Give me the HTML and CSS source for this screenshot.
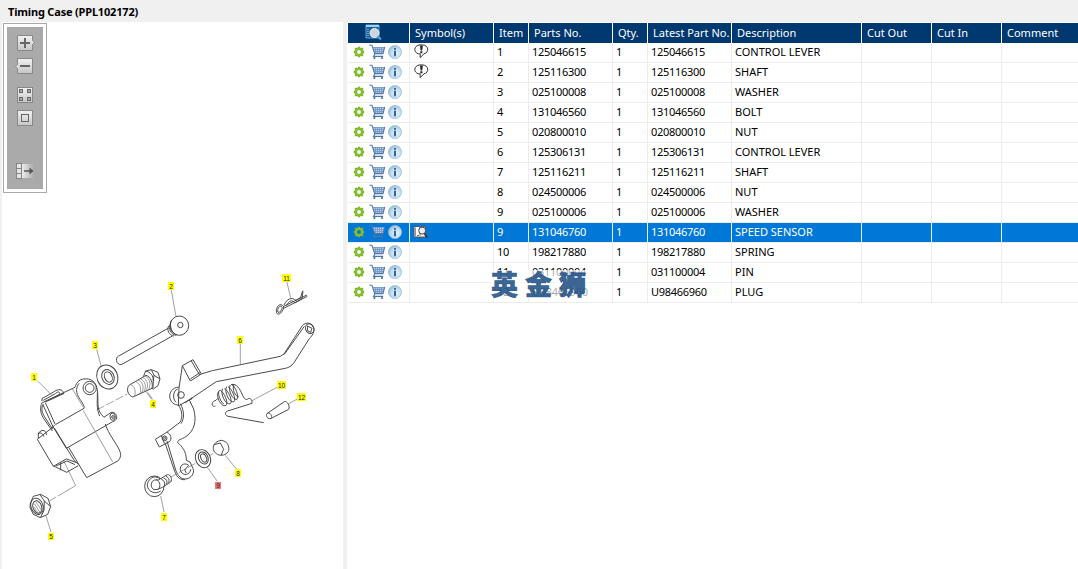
FILE: index.html
```html
<!DOCTYPE html>
<html lang="en">
<head>
  <meta charset="UTF-8" />
  <meta name="viewport" content="width=device-width, initial-scale=1" />
  <title>Timing Case (PPL102172)</title>
  <link rel="stylesheet" href="styles.css">
</head>
<body>
  <!-- shared icons -->
  <svg class="defs" aria-hidden="true">
    <defs>
      <linearGradient id="btn" x1="0" y1="0" x2="0" y2="1">
        <stop offset="0" stop-color="#f2f2f2" />
        <stop offset="1" stop-color="#c6c6c6" />
      </linearGradient>
      <linearGradient id="fade">
        <stop offset="0" stop-color="#ececec" />
        <stop offset="1" stop-color="#aaaaaa" />
      </linearGradient>
      <radialGradient id="orb" cx=".6" cy=".6" r=".65">
        <stop offset="0" stop-color="#e6f2fb" />
        <stop offset=".6" stop-color="#c0dcf0" />
        <stop offset="1" stop-color="#8fb5d4" />
      </radialGradient>
      <symbol id="gear" viewBox="0 0 12 12">
        <g stroke="#7db52c" stroke-width="2.4" fill="none">
          <path d="M6 .8V3.500M6 8.500V11.200M.8 6H3.500M8.500 6H11.200M2.200 2.200l2 2M7.800 7.800l2 2M9.800 2.200l-2 2M4.200 7.800l-2 2" />
          <circle cx="6" cy="6" r="3.100" stroke="#86bb32" />
        </g>
      </symbol>
      <symbol id="cart" viewBox="0 0 17 16">
        <path d="M3.500 3H15.600L14 9H5.600z" fill="#b4cae5" />
        <path d="M3.600 3.500H15.400M4.200 5.500H15M4.800 7.500H14.400M6.500 3v6M8.500 3v6M10.500 3v6M12.500 3v6" stroke="#6c92c0" stroke-width=".7" fill="none" />
        <path d="M.4 1.200H2.900L5.700 9.600H14L15.700 3M5.900 9.800L4.600 12.400H14.200" stroke="#4d77a8" stroke-width="1.100" fill="none" />
        <circle cx="5.400" cy="14" r="1.100" fill="#3f6fa5" />
        <circle cx="13" cy="14" r="1.100" fill="#3f6fa5" />
      </symbol>
      <symbol id="info" viewBox="0 0 14 14">
        <circle cx="7" cy="7" r="6.600" fill="url(#orb)" stroke="#9dbdd6" stroke-width=".7" />
        <path d="M6 3h2v1.800H6zM6 5.800H8v5.500H6z" fill="#33639a" />
      </symbol>
      <symbol id="note" viewBox="0 0 16 15">
        <path d="M4.600 9.800C-1 8.600-.3 1.200 6 .9h2.600c6.200.3 7 7.600 1.400 8.900L6.200 13.600V9.800z" fill="#fff" stroke="#333" />
        <path d="M6 1.600h2.800L8.200 6.600H6.600zM6.300 7.300h2.100v1.900H6.300z" fill="#222" />
      </symbol>
      <symbol id="book" viewBox="0 0 16 14">
        <path d="M1 1.500h5l1 1 1-1h4.500V12H8l-1 1-1-1H1z" fill="#fff" stroke="#555" />
        <path d="M2.300 2.500v8.500M4 10.500h2M7 2.500V12" stroke="#777" />
        <circle cx="9.200" cy="5.600" r="3.500" fill="#e8eef2" stroke="#444" />
        <path d="M11.300 8.500l3 4" stroke="#4b3a2b" stroke-width="2" />
      </symbol>
    </defs>
  </svg>

  <div class="title-bar"><h1>Timing Case (PPL102172)</h1></div>

  <div class="content">
    <div class="drawing">
      <svg class="diagram" viewBox="2 23 341 546">
        <!-- 11 split pin -->
        <g transform="translate(260 265) scale(.3333)">
          <path class="lead" d="M80 48L92 98" />
          <path d="M67 121C58 114 49 126 49 138C49 150 58 150 65 141C70 134 74 124 67 121ZM64 124C57 122 53 131 53 138C53 144 58 144 62 138C66 132 68 127 64 124M69 125L141 90M69 131L142 94M72 120C82 100 94 96 108 106L122 97L128 77M80 122C86 107 96 103 105 114L126 101L129 79" />
        </g>
        <!-- 2 shaft, 3 washer, 4 bolt -->
        <g transform="translate(90 270) scale(.3333)">
          <path class="lead" d="M244 60L258 140M20 238L34 290M185 388L168 364" />
          <path class="lead axis" d="M20 420L112 372" />
          <path d="M236 174L88 257C72 263 80 288 96 283L247 198M236 168C229 179 238 197 252 198M241 162C234 177 243 193 258 196" />
          <ellipse class="solid" cx="268" cy="167" rx="28" ry="29" />
          <path d="M244 151C237 168 245 190 261 195" />
          <circle cx="271" cy="165" r="8" />
          <ellipse cx="52" cy="321" rx="31" ry="37" transform="rotate(-24 52 321)" />
          <ellipse cx="54" cy="321" rx="18" ry="23" transform="rotate(-24 54 321)" />
          <ellipse cx="55" cy="321" rx="11" ry="16" transform="rotate(-24 55 321)" />
          <path class="solid" d="M161 318L167 303L184 299L204 307L210 327L204 347L190 357L175 350Z" />
          <path d="M167 303C182 307 190 316 190 333L189 354M184 299L192 316L210 327M192 316L190 333" />
          <path class="solid" d="M168 316L118 345C107 356 114 378 129 381L186 355C190 339 182 320 168 316Z" />
          <path class="thin" d="M122 344C134 348 139 366 133 379M138 335C152 342 156 359 148 373M145 331C160 337 163 354 155 369M152 327C166 333 170 350 162 366M159 323C173 329 176 346 169 362M166 319C180 325 183 342 176 359" />
        </g>
        <!-- 1 control lever assembly, 5 nut -->
        <g transform="translate(20 360) scale(.3333)">
          <path class="lead" d="M52 62L94 104M130 300L167 377L136 395M78 468L93 516" />
          <path class="lead axis" d="M136 395L90 422" />
          <path d="M63 131L75 124L165 82L167 76C174 60 186 55 205 57C220 60 229 71 232 90C236 119 229 145 244 163L252 172L272 158C283 154 291 164 290 174C289 180 284 183 278 185L139 265L99 200L69 135" />
          <path d="M66 124V116L104 94C114 86 128 88 130 98L129 104M70 121L106 101C114 93 120 95 119 103L83 122M75 126L103 114L130 101M70 132C62 146 66 159 76 174L98 208M64 133C59 148 63 164 72 177L97 213M76 128L105 192" />
          <path d="M106 194L192 145C196 137 179 119 174 108C167 94 169 82 177 70M232 98C233 120 228 146 239 168M256 192C260 209 278 236 291 257C302 276 307 286 295 302L200 353L146 262M99 201L52 238L100 319M96 202L104 196M103 204L163 302L175 313" />
          <path d="M55 235V219L66 211C76 211 80 218 79 225M54 221C62 216 70 221 72 230M100 319L139 297L168 307M101 318L140 337L175 317M108 318L141 303L165 314M122 307V331" />
          <path class="lead" d="M155 84L190 142M190 152L278 306" />
          <circle cx="209" cy="84" r="20" /><circle cx="209" cy="84" r="13" />
          <ellipse cx="278" cy="170" rx="8" ry="11" /><circle cx="279" cy="171" r="4" />
          <path class="solid" d="M31 430L40 409L62 403L84 415L92 440L83 463L61 473L40 463L30 443Z" />
          <path d="M60 404L73 423L92 440M73 423L72 452L61 473" />
          <ellipse cx="51" cy="439" rx="18" ry="25" transform="rotate(-18 51 439)" />
          <ellipse cx="52" cy="441" rx="13" ry="19" transform="rotate(-18 52 441)" />
          <path class="thin" d="M43 431L60 457M48 426L64 450M41 440L54 459" />
        </g>
        <!-- 6 lever, 10 spring, 12 plug -->
        <g transform="translate(160 310) scale(.3333)">
          <path class="lead" d="M241 102V162M351 232L276 272M412 267L386 281" />
          <path class="solid" d="M62 232C44 229 30 241 29 258C29 275 44 287 57 285" />
          <path d="M53 237C39 241 37 267 48 277" />
          <path class="solid" d="M55 286L57 235L67 167L99 149L124 192L157 182L361 139L372 132L427 47C438 34 457 38 462 55C464 65 457 77 448 86L402 158C395 168 386 173 376 175L169 215L90 268L59 286Z" />
          <path d="M67 167L91 213L124 192M91 207L121 187M94 153L119 195M371 134L376 129L433 49M75 279L97 263L92 270" />
          <circle cx="63" cy="255" r="10" />
          <ellipse cx="449" cy="56" rx="12" ry="15" transform="rotate(-24 449 56)" />
          <path d="M442 48L456 55L452 67L443 62Z" />
          <path d="M166 289C152 291 154 274 168 271L174 265M176 244C165 261 185 293 198 286C207 280 192 246 181 241C171 240 176 270 191 282M188 236C179 251 198 287 211 281C220 275 204 239 193 236M200 230C191 246 209 281 222 275C230 269 215 234 204 230M211 225C202 240 219 272 231 268C238 262 226 227 215 224M222 222C215 238 226 260 236 260M213 224C230 219 240 238 246 252C252 267 258 272 265 266C273 264 277 270 276 280L203 303C194 306 194 316 204 319L311 338" />
          <path d="M322 310L373 275C382 271 391 290 386 298L334 325C324 330 315 317 322 310C330 305 338 319 334 325" />
        </g>
        <!-- bracket, 7 screw, 8 plug, 9 washer -->
        <g transform="translate(130 390) scale(.3333)">
          <path class="lead" d="M54 8L68 28M92 318L102 366M232 232L262 274M286 196L320 238" />
          <path class="lead axis" d="M118 264L250 190" />
          <path d="M145 45C158 64 158 83 150 97L110 127L76 148L88 171L120 154M111 153L138 243C144 258 154 268 168 267C183 265 195 250 189 235L180 216L169 211C170 185 155 168 143 158C143 150 148 150 163 143C196 123 200 91 191 57L178 30M105 158L134 244C141 264 152 270 165 269M151 41C164 65 163 86 153 101" />
          <path d="M110 127C124 131 125 147 120 154M94 137L103 160" />
          <circle cx="104" cy="145" r="7" /><circle cx="104" cy="145" r="3" />
          <path d="M176 226C160 214 145 230 153 245C160 259 180 255 182 238M176 226L164 240L169 249" />
          <ellipse class="solid" cx="219" cy="206" rx="22" ry="28" transform="rotate(-25 219 206)" />
          <ellipse cx="220" cy="204" rx="14" ry="19" transform="rotate(-25 220 204)" />
          <ellipse cx="221" cy="204" rx="8" ry="13" transform="rotate(-25 221 204)" />
          <path class="solid" d="M250 172C250 161 262 152 274 151C290 153 299 166 296 182C292 192 279 198 267 195C255 190 249 183 250 172Z" />
          <path d="M252 164L271 159L281 178L273 196" />
          <ellipse cx="73" cy="289" rx="29" ry="31" />
          <path d="M91 267C73 251 51 269 52 287C53 304 76 315 92 303" />
          <path class="solid" d="M73 270L85 270L112 254C122 252 128 269 122 276L97 292L84 298L72 299C61 294 61 274 73 270Z" />
          <path d="M79 268C91 275 93 291 84 298M94 268C103 271 106 279 103 287M101 264C110 267 113 275 110 283M108 259C117 263 119 270 116 278" />
        </g>

        <!-- callouts -->
        <g class="tags">
          <rect x="282" y="274" width="9" height="8" /><text x="286.500" y="280.500">11</text>
          <rect x="168" y="282" width="6" height="8" /><text x="171" y="288.500">2</text>
          <rect x="92" y="341" width="6" height="8" /><text x="95" y="347.500">3</text>
          <rect x="237" y="336" width="6" height="8" /><text x="240" y="342.500">6</text>
          <rect x="31" y="373" width="6" height="8" /><text x="34" y="379.500">1</text>
          <rect x="150" y="400" width="6" height="8" /><text x="153" y="406.500">4</text>
          <rect x="277" y="381" width="9" height="8" /><text x="281.500" y="387.500">10</text>
          <rect x="297" y="393" width="9" height="8" /><text x="301.500" y="399.500">12</text>
          <rect x="235" y="469" width="6" height="8" /><text x="238" y="475.500">8</text>
          <rect class="current" x="215" y="482" width="6" height="7" /><text x="218" y="488">9</text>
          <rect x="161" y="513" width="6" height="8" /><text x="164" y="519.500">7</text>
          <rect x="48" y="533" width="6" height="7" /><text x="51" y="539">5</text>
        </g>
      </svg>

      <div class="palette">
        <svg viewBox="0 0 36 162">
          <g fill="url(#btn)" stroke="#888">
            <path d="M10.500 8.500h15v5l2 2-2 2v6h-15z" />
            <path d="M10.500 31.500h15v15h-15v-5l-2-2 2-2z" />
            <rect x="10.500" y="60.500" width="15" height="15" />
            <rect x="10.500" y="83.500" width="15" height="15" />
          </g>
          <path d="M13 16h10M18 11v10M13 39h10" stroke="#666" stroke-width="2" />
          <g fill="#aaa" stroke="#666">
            <rect x="12.500" y="62.500" width="3" height="3" />
            <rect x="20.500" y="62.500" width="3" height="3" />
            <rect x="12.500" y="70.500" width="3" height="3" />
            <rect x="20.500" y="70.500" width="3" height="3" />
            <rect x="14.500" y="87.500" width="7" height="7" fill="none" />
          </g>
          <rect x="15" y="137" width="12" height="14" fill="url(#fade)" />
          <path d="M10 137h4v14h-4z" fill="#e4e4e4" />
          <path d="M9.500 136.500h6M9.500 151.500h6M9.500 136v16M14.500 136v16M10 141.500h4M10 146.500h4" stroke="#858585" />
          <path d="M17 144h7" stroke="#555" stroke-width="1.500" />
          <path d="M22.500 140.500l4 3.500-4 3.500z" fill="#555" />
        </svg>
      </div>
    </div>

    <div class="parts">
      <table>
        <colgroup>
          <col class="c-tools"><col class="c-sym"><col class="c-item"><col class="c-part"><col class="c-qty">
          <col class="c-part"><col class="c-desc"><col class="c-cut"><col class="c-cut"><col class="c-comment">
        </colgroup>
        <thead>
          <tr>
            <th class="tools">
              <svg class="find" viewBox="0 0 18 18">
                <path d="M1 1h13v13H1z" fill="#16609a" stroke="#5aa5d5" />
                <path d="M1 2h13" stroke="#9fd0ee" stroke-width="2" />
                <path d="M3 5v8" stroke="#b6d7ec" stroke-dasharray="1 1" />
                <circle cx="9.500" cy="9" r="4.500" fill="#cbd5dc" stroke="#eef3f6" />
                <path d="M12.500 12l3.500 3.500" stroke="#5a9bd0" stroke-width="2.200" />
              </svg>
            </th>
            <th>Symbol(s)</th><th>Item</th><th>Parts No.</th><th>Qty.</th><th>Latest Part No.</th><th>Description</th><th>Cut Out</th><th>Cut In</th><th>Comment</th>
          </tr>
        </thead>
        <tbody>
          <tr>
            <td class="tools"><svg class="gear"><use href="#gear" /></svg><svg class="cart"><use href="#cart" /></svg><svg class="info"><use href="#info" /></svg></td>
            <td><svg class="note"><use href="#note" /></svg></td><td>1</td><td>125046615</td><td>1</td><td>125046615</td><td class="desc">CONTROL LEVER</td><td></td><td></td><td></td>
          </tr>
          <tr>
            <td class="tools"><svg class="gear"><use href="#gear" /></svg><svg class="cart"><use href="#cart" /></svg><svg class="info"><use href="#info" /></svg></td>
            <td><svg class="note"><use href="#note" /></svg></td><td>2</td><td>125116300</td><td>1</td><td>125116300</td><td class="desc">SHAFT</td><td></td><td></td><td></td>
          </tr>
          <tr>
            <td class="tools"><svg class="gear"><use href="#gear" /></svg><svg class="cart"><use href="#cart" /></svg><svg class="info"><use href="#info" /></svg></td>
            <td></td><td>3</td><td>025100008</td><td>1</td><td>025100008</td><td class="desc">WASHER</td><td></td><td></td><td></td>
          </tr>
          <tr>
            <td class="tools"><svg class="gear"><use href="#gear" /></svg><svg class="cart"><use href="#cart" /></svg><svg class="info"><use href="#info" /></svg></td>
            <td></td><td>4</td><td>131046560</td><td>1</td><td>131046560</td><td class="desc">BOLT</td><td></td><td></td><td></td>
          </tr>
          <tr>
            <td class="tools"><svg class="gear"><use href="#gear" /></svg><svg class="cart"><use href="#cart" /></svg><svg class="info"><use href="#info" /></svg></td>
            <td></td><td>5</td><td>020800010</td><td>1</td><td>020800010</td><td class="desc">NUT</td><td></td><td></td><td></td>
          </tr>
          <tr>
            <td class="tools"><svg class="gear"><use href="#gear" /></svg><svg class="cart"><use href="#cart" /></svg><svg class="info"><use href="#info" /></svg></td>
            <td></td><td>6</td><td>125306131</td><td>1</td><td>125306131</td><td class="desc">CONTROL LEVER</td><td></td><td></td><td></td>
          </tr>
          <tr>
            <td class="tools"><svg class="gear"><use href="#gear" /></svg><svg class="cart"><use href="#cart" /></svg><svg class="info"><use href="#info" /></svg></td>
            <td></td><td>7</td><td>125116211</td><td>1</td><td>125116211</td><td class="desc">SHAFT</td><td></td><td></td><td></td>
          </tr>
          <tr>
            <td class="tools"><svg class="gear"><use href="#gear" /></svg><svg class="cart"><use href="#cart" /></svg><svg class="info"><use href="#info" /></svg></td>
            <td></td><td>8</td><td>024500006</td><td>1</td><td>024500006</td><td class="desc">NUT</td><td></td><td></td><td></td>
          </tr>
          <tr>
            <td class="tools"><svg class="gear"><use href="#gear" /></svg><svg class="cart"><use href="#cart" /></svg><svg class="info"><use href="#info" /></svg></td>
            <td></td><td>9</td><td>025100006</td><td>1</td><td>025100006</td><td class="desc">WASHER</td><td></td><td></td><td></td>
          </tr>
          <tr class="selected">
            <td class="tools"><svg class="gear"><use href="#gear" /></svg><svg class="cart"><use href="#cart" /></svg><svg class="info"><use href="#info" /></svg></td>
            <td><svg class="book"><use href="#book" /></svg></td><td>9</td><td>131046760</td><td>1</td><td>131046760</td><td class="desc">SPEED SENSOR</td><td></td><td></td><td></td>
          </tr>
          <tr>
            <td class="tools"><svg class="gear"><use href="#gear" /></svg><svg class="cart"><use href="#cart" /></svg><svg class="info"><use href="#info" /></svg></td>
            <td></td><td>10</td><td>198217880</td><td>1</td><td>198217880</td><td class="desc">SPRING</td><td></td><td></td><td></td>
          </tr>
          <tr>
            <td class="tools"><svg class="gear"><use href="#gear" /></svg><svg class="cart"><use href="#cart" /></svg><svg class="info"><use href="#info" /></svg></td>
            <td></td><td>11</td><td>031100004</td><td>1</td><td>031100004</td><td class="desc">PIN</td><td></td><td></td><td></td>
          </tr>
          <tr>
            <td class="tools"><svg class="gear"><use href="#gear" /></svg><svg class="cart"><use href="#cart" /></svg><svg class="info"><use href="#info" /></svg></td>
            <td></td><td>12</td><td>U98466960</td><td>1</td><td>U98466960</td><td class="desc">PLUG</td><td></td><td></td><td></td>
          </tr>
        </tbody>
      </table>
      <div class="watermark" lang="zh">英金狮</div>
    </div>
  </div>
</body>
</html>
```
FILE: styles.css
```css
* {
  box-sizing: border-box;
}

html, body {
  margin: 0;
  padding: 0;
  height: 100%;
  overflow: hidden;
  font-family: "Noto Sans", "Open Sans", sans-serif;
  font-size: 11px;
  color: #000;
  background-color: #f0f0f0;
}

body {
  display: flex;
  flex-direction: column;
}

svg {
  display: block;
}

.defs {
  position: absolute;
  width: 0;
  height: 0;
}

.title-bar {
  height: 22px;
  padding: 2px 8px 0;
}

.title-bar h1 {
  margin: 0;
  font-size: 11px;
  line-height: 20px;
  letter-spacing: -0.18px;
}

.content {
  flex: 1;
  display: flex;
  gap: 4px;
  padding-left: 2px;
}

/* drawing panel */
.drawing {
  position: relative;
  width: 341px;
  padding-top: 1px;
  background: #fff;
}

.diagram {
  width: 341px;
  height: 546px;
  fill: none;
  stroke: #444;
  stroke-width: 2.9;
  stroke-linejoin: round;
}

.diagram .solid {
  fill: #fff;
}

.diagram .thin {
  stroke: #777;
  stroke-width: 2.2;
}

.diagram .lead {
  stroke: #888;
  stroke-width: 2.4;
}

.diagram .axis {
  stroke-dasharray: 26 6;
}

.tags {
  stroke: none;
  fill: #222;
  font: 6.5px "Liberation Sans", sans-serif;
  text-anchor: middle;
}

.tags rect {
  fill: #ff0;
}

.tags .current {
  fill: #f27474;
}

.palette {
  position: absolute;
  left: 1px;
  top: 1px;
  width: 44px;
  height: 170px;
  padding: 3px;
  border: 1px solid #a9a9a9;
  background: #fff;
}

.palette svg {
  width: 36px;
  height: 162px;
  background: #aaa;
}

/* parts list */
.parts {
  position: relative;
  flex: 1;
  padding: 1px 0 0 1px;
  background: #fff;
}

table {
  width: 100%;
  table-layout: fixed;
  border-collapse: separate;
  border-spacing: 0;
}

.c-tools { width: 62px; }
.c-sym { width: 84px; }
.c-item, .c-qty { width: 35px; }
.c-part { width: 84px; }
.c-desc { width: 130px; }
.c-cut { width: 70px; }

th, td {
  height: 20px;
  padding: 0 0 2px 3px;
  text-align: left;
  white-space: nowrap;
  line-height: 16px;
  border-right: 1px solid #ececec;
}

th {
  padding: 0 0 0 5px;
  font-weight: normal;
  color: #fff;
  background: #003870;
  border-right-color: #fff;
}

td {
  letter-spacing: -0.3px;
  border-bottom: 1px solid #ececec;
}

th:last-child, td:last-child {
  border-right: none;
}

.desc {
  letter-spacing: 0;
}

.selected td {
  color: #fff;
  background: #0078d7;
}

.tools {
  font-size: 0;
  line-height: 0;
}

.tools svg {
  display: inline-block;
  vertical-align: middle;
}

td.tools {
  padding: 0 0 1px 5px;
}

.gear {
  width: 12px;
  height: 12px;
  margin-right: 4px;
}

.cart {
  width: 17px;
  height: 16px;
  margin-right: 2px;
}

.info {
  width: 14px;
  height: 14px;
}

th .find {
  width: 18px;
  height: 18px;
  margin-left: 12px;
}

.note {
  width: 16px;
  height: 15px;
  margin-left: 1px;
}

.book {
  width: 16px;
  height: 14px;
}

.watermark {
  position: absolute;
  left: 142px;
  top: 248px;
  width: 99px;
  height: 29px;
  padding-left: 2px;
  line-height: 27px;
  font-family: "Noto Sans CJK SC", sans-serif;
  font-size: 27px;
  font-weight: 900;
  letter-spacing: 7px;
  white-space: nowrap;
  color: rgba(24, 76, 130, 0.85);
  -webkit-text-stroke: 0.6px rgba(24, 76, 130, 0.85);
  background: rgba(255, 255, 255, 0.65);
}
```
